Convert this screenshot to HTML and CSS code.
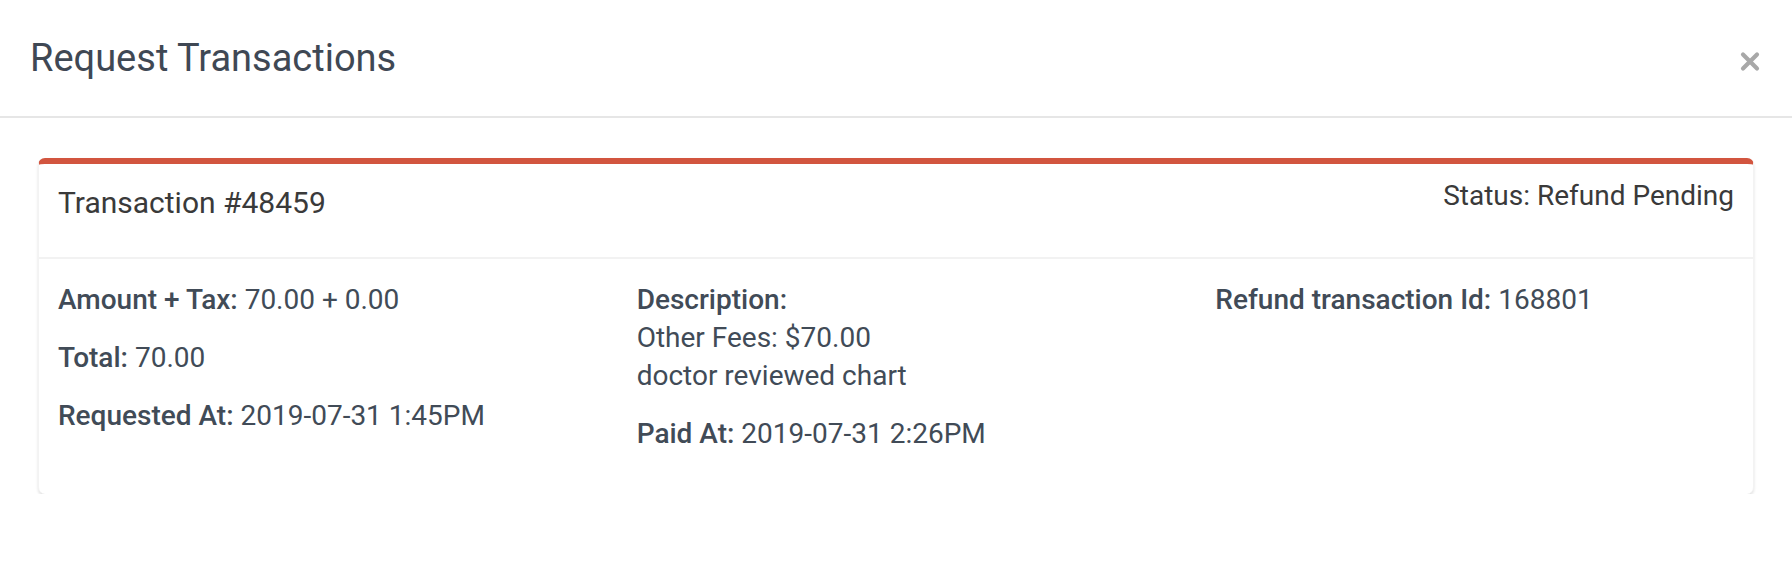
FILE: index.html
```html
<!DOCTYPE html>
<html lang="en">
<head>
<meta charset="utf-8">
<title>Request Transactions</title>
<link rel="stylesheet" href="styles.css">
</head>
<body>
<div class="modal">
  <div class="modal-header">
    <h4 class="modal-title">Request Transactions</h4>
    <button class="close" type="button" aria-label="Close">
      <svg width="20" height="21" viewBox="0 0 20 21" aria-hidden="true">
        <path d="M3 3.5 L17 17.5 M17 3.5 L3 17.5" stroke="#a8a8a8" stroke-width="4.2" stroke-linecap="round" fill="none"/>
      </svg>
    </button>
  </div>
  <div class="modal-body">
    <div class="card">
      <div class="card-header">
        <h5 class="card-title">Transaction #48459</h5>
        <div class="status">Status: Refund Pending</div>
      </div>
      <div class="card-body">
        <div class="col">
          <p><span class="label">Amount + Tax:</span> 70.00 + 0.00</p>
          <p><span class="label">Total:</span> 70.00</p>
          <p><span class="label">Requested At:</span> 2019-07-31 1:45PM</p>
        </div>
        <div class="col">
          <p><span class="label">Description:</span><br>Other Fees: $70.00<br>doctor reviewed chart</p>
          <p><span class="label">Paid At:</span> 2019-07-31 2:26PM</p>
        </div>
        <div class="col">
          <p><span class="label">Refund transaction Id:</span> 168801</p>
        </div>
      </div>
    </div>
  </div>
</div>
</body>
</html>
```

FILE: styles.css
```css
html, body {
  margin: 0;
  padding: 0;
  background: #ffffff;
}

body {
  font-family: Roboto, "Liberation Sans", Arial, sans-serif;
  color: #414b57;
}

.modal {
  width: 1792px;
}

.modal-header {
  display: flex;
  align-items: center;
  justify-content: space-between;
  padding: 36px 32px 36px 30px;
  border-bottom: 2px solid #e6e6e6;
}

.modal-title {
  margin: 0;
  font-size: 38px;
  line-height: 44px;
  font-weight: 400;
  color: #3f4854;
}

.close {
  margin: 7px 0 0 0;
  padding: 0;
  border: 0;
  background: transparent;
  width: 20px;
  height: 21px;
  display: flex;
}

.modal-body {
  padding: 40px 38px 0 38px;
}

.card {
  background: #fff;
  border-top: 6px solid #d2553f;
  border-left: 1px solid #f3f3f3;
  border-right: 1px solid #f3f3f3;
  border-radius: 7px;
  box-shadow: 0 2px 3px rgba(0, 0, 0, 0.12);
}

.card-header {
  display: flex;
  justify-content: space-between;
  align-items: flex-start;
  padding: 14px 19px 36px 19px;
  border-bottom: 2px solid #f2f2f2;
}

.card-title {
  margin: 7px 0 0 0;
  font-size: 30px;
  line-height: 36px;
  font-weight: 400;
  color: #3a3a3a;
}

.status {
  font-size: 28px;
  line-height: 36px;
  color: #3a3a3a;
}

.card-body {
  display: grid;
  grid-template-columns: repeat(3, 1fr);
  column-gap: 60px;
  padding: 22px 19px 21px 19px;
}

.col p {
  margin: 0 0 20px 0;
  font-size: 28px;
  line-height: 38px;
}

.label {
  font-weight: 500;
}
```
